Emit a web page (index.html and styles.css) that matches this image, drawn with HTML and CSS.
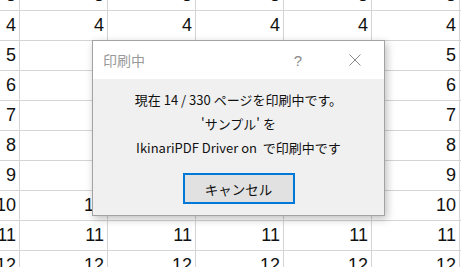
FILE: index.html
```html
<!DOCTYPE html>
<html lang="ja">
<head>
    <meta charset="UTF-8">
    <title>印刷中</title>
    <link rel="stylesheet" href="styles.css">
</head>
<body>
    <!-- Worksheet behind the dialog -->
    <div class="sheet" id="sheet"></div>

    <!-- Print progress dialog -->
    <div class="dialog">
        <div class="dialog-title">
            <span class="title-text">印刷中</span>
            <span class="title-help">?</span>
            <svg class="title-close" width="12" height="12" viewBox="0 0 12 12">
                <path d="M0.5 0.5 L11.5 11.5 M11.5 0.5 L0.5 11.5" stroke="#8a8a8a" stroke-width="1" fill="none"/>
            </svg>
        </div>
        <div class="dialog-body">
            <p>現在 14 / 330 ページを印刷中です。</p>
            <p>'サンプル' を</p>
            <p>IkinariPDF Driver on&nbsp; で印刷中です</p>
            <button class="cancel-btn">キャンセル</button>
        </div>
    </div>

    <script>
        // Fill rows 3..12, every column shows the row number
        const sheet = document.getElementById('sheet');
        for (let row = 3; row <= 12; row++) {
            for (let col = 0; col < 7; col++) {
                const cell = document.createElement('div');
                cell.className = 'cell';
                cell.textContent = col < 6 ? row : '';
                sheet.appendChild(cell);
            }
        }
    </script>
</body>
</html>
```

FILE: styles.css
```css
* {
    box-sizing: border-box;
    margin: 0;
    padding: 0;
}

html {
    overflow: hidden;
}

body {
    width: 461px;
    height: 267px;
    overflow: hidden;
    background-color: #fff;
    position: relative;
}

.sheet {
    display: grid;
    grid-template-columns: 20px repeat(5, 88px) 40px;
    grid-auto-rows: 30px;
    margin-top: -19px;
    font-family: "Liberation Sans", Arial, sans-serif;
    font-size: 18px;
    color: #111;
}

.cell {
    border-right: 1px solid #d4d4d4;
    border-bottom: 1px solid #d4d4d4;
    text-align: right;
    padding-right: 3px;
    line-height: 29px;
    overflow: hidden;
    white-space: nowrap;
    direction: rtl;
}

/* Dialog */
.dialog {
    position: absolute;
    left: 92px;
    top: 40px;
    width: 293px;
    height: 176px;
    border: 1px solid #a3a3a3;
    background-color: #f0f0f0;
    box-shadow: 2px 3px 8px rgba(0, 0, 0, 0.25);
    font-family: "Noto Sans CJK JP", "Noto Sans", sans-serif;
}

.dialog-title {
    height: 38px;
    background-color: #fff;
    display: flex;
    align-items: center;
    padding-left: 10px;
    font-size: 14px;
    color: #9a9a9a;
}

.title-text {
    flex: 1;
}

.title-help {
    font-family: "Liberation Sans", Arial, sans-serif;
    font-size: 15px;
    color: #8a8a8a;
    margin-right: 47px;
}

.title-close {
    margin-right: 23px;
}

.dialog-body {
    display: flex;
    flex-direction: column;
    align-items: center;
    padding-top: 9px;
    font-size: 13px;
    line-height: 24px;
    color: #111;
}

.cancel-btn {
    margin-top: 13px;
    width: 112px;
    height: 31px;
    border: 2px solid #0078d7;
    background-color: #e1e1e1;
    font-family: "Noto Sans CJK JP", sans-serif;
    font-size: 13.5px;
    color: #111;
}
```
